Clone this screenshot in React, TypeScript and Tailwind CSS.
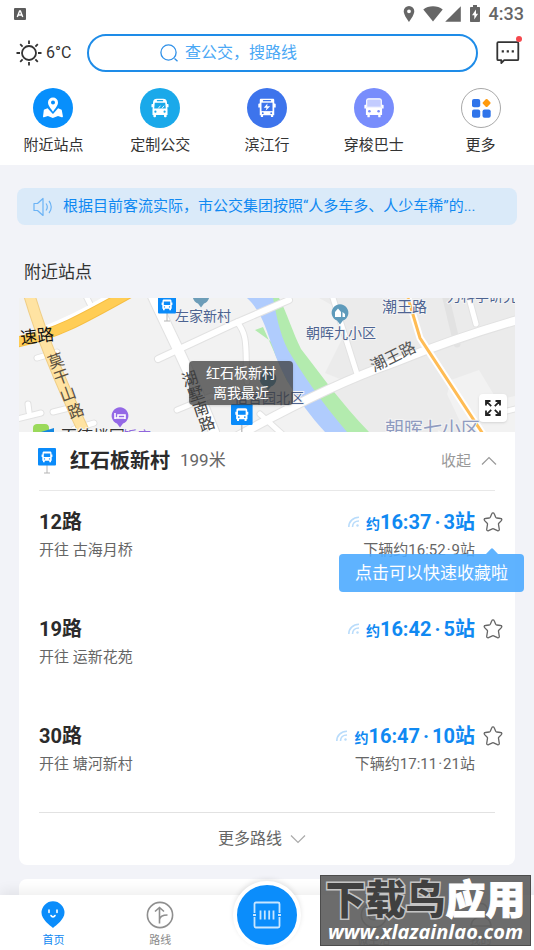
import { useState } from "react";
import type { ReactNode } from "react";

const shortcuts = [
  { label: "附近站点", bg: "bg-[#078ffc]", icon: <NearbyIcon /> },
  { label: "定制公交", bg: "bg-[#1aa9ea]", icon: <CoachIcon /> },
  { label: "滨江行", bg: "bg-[#3d74ec]", icon: <RiverBusIcon /> },
  { label: "穿梭巴士", bg: "bg-[#788dfc]", icon: <ShuttleIcon /> },
  { label: "更多", bg: "border border-[#a8a8a8] bg-white", icon: <MoreIcon /> },
];

const routes = [
  { id: 12, to: "古海月桥", time: "16:37", stops: 3, next: "16:52", nextStops: 9 },
  { id: 19, to: "运新花苑", time: "16:42", stops: 5 },
  { id: 30, to: "塘河新村", time: "16:47", stops: 10, next: "17:11", nextStops: 21 },
];

function NearbyIcon() {
  return (
    <svg viewBox="0 0 24 24" className="size-6" fill="#fff">
      <path d="M6.600 12.200 3.400 13.400c-.4.100-.6.400-.6.800L2 20.400c-.1.700.4 1.100 1 .9l3.900-1.200 4.900 1.800 5.200-1.800 3.700 1.200c.7.200 1.300-.3 1.200-1L20.800 14.200c-.1-.4-.3-.7-.7-.8l-3-1.100-4.600 5.200c-.3.300-.8.300-1.100 0z" />
      <path fillRule="evenodd" d="M12 1.500a5 5 0 0 0-5 5c0 3.400 3.200 6.200 5 9.300 1.800-3.100 5-5.900 5-9.300a5 5 0 0 0-5-5zm0 3.100a2 2 0 1 1 0 4 2 2 0 0 1 0-4z" />
    </svg>
  );
}

function CoachIcon() {
  return (
    <svg viewBox="0 0 24 24" className="size-[22px]">
      <path
        fill="#fff"
        d="M8.500 1.800h7c2.300 0 3.700 1.100 4 3.400l.2 2.300h.8c.5 0 .8.300.8.800v3h-1.400l.3 2.200v6h-1v1.700c0 .5-.4.900-.9.900H17.300c-.5 0-.9-.4-.9-.9v-1.700H7.600v1.700c0 .5-.4.900-.9.900H5.700c-.5 0-.9-.4-.9-.9v-1.700h-1v-6l.3-2.200H2.700v-3c0-.5.300-.8.800-.8h.8l.2-2.300c.3-2.300 1.700-3.400 4-3.400z"
      />
      <rect x="8.500" y="3.300" width="7" height="1.300" rx=".6" fill="#1aa9ea" />
      <path d="M6.300 6.200h11.400l.6 6.300H5.700z" fill="#1aa9ea" />
      <path d="m10 12.500 2.500-3M14 12.500l2.500-3" stroke="#fff" strokeWidth="1" />
      <circle cx="7" cy="16" r="1.200" fill="#1aa9ea" />
      <circle cx="17" cy="16" r="1.200" fill="#1aa9ea" />
    </svg>
  );
}

function RiverBusIcon() {
  return (
    <svg viewBox="0 0 24 24" className="size-[22px]">
      <path
        fill="#fff"
        d="M5.500 2h13c.8 0 1.400.6 1.400 1.400V7h.7c.5 0 .9.400.9.900v3.600h-1.600v8.300h-1.200v1.900h-2.400v-1.900H7.700v1.900H5.300v-1.900H4.100v-8.300H2.500V7.900c0-.5.400-.9.900-.9h.7V3.400C4.100 2.600 4.700 2 5.500 2z"
      />
      <rect x="7.500" y="3.300" width="9" height="1.300" rx=".6" fill="#3d74ec" />
      <path d="M6 6.200h12v9.200H6z" fill="#3d74ec" />
      <path d="m12.500 7-4 4.600h3l-1 3.400 5-5h-3.300z" fill="#fff" />
      <circle cx="7.400" cy="17.600" r="1" fill="#3d74ec" />
      <circle cx="16.600" cy="17.600" r="1" fill="#3d74ec" />
    </svg>
  );
}

function ShuttleIcon() {
  return (
    <svg viewBox="0 0 24 24" className="size-[22px]">
      <path d="M6 2h12c1.100 0 2 .8 2 1.900v7.300H4V3.900C4 2.800 4.900 2 6 2z" fill="#c3ccff" stroke="#fff" strokeWidth="1.200" />
      <path
        fill="#fff"
        d="M2.200 8.500h1.300v3h17v-3h1.300c.4 0 .7.300.7.700v3.300h-1.700v7.200h-1.600v1.800c0 .3-.3.600-.6.600h-1.400c-.3 0-.6-.3-.6-.6v-1.800H7.400v1.800c0 .3-.3.600-.6.600H5.400c-.3 0-.6-.3-.6-.6v-1.800H3.200v-7.200H1.500V9.200c0-.4.300-.7.700-.7z"
      />
      <circle cx="7" cy="15.500" r="1.400" fill="#788dfc" />
      <circle cx="17" cy="15.500" r="1.400" fill="#788dfc" />
    </svg>
  );
}

function MoreIcon() {
  return (
    <svg viewBox="0 0 24 24" className="size-6">
      <rect x="3" y="3" width="8.200" height="8.200" rx="2" fill="#2f74ea" />
      <rect x="3" y="13.500" width="8.200" height="8.200" rx="2" fill="#2f74ea" />
      <rect x="13.500" y="13.500" width="8.200" height="8.200" rx="2" fill="#2f74ea" />
      <rect x="14.400" y="3.800" width="6.400" height="6.400" rx="1.200" fill="#ff9a0c" transform="rotate(45 17.600 7)" />
    </svg>
  );
}

function StatusBar() {
  return (
    <div className="flex h-7 items-center justify-between pr-2.5 pl-3.5">
      <svg viewBox="0 0 12 12" className="size-3">
        <rect width="12" height="12" rx="1" fill="#5c5c5c" />
        <path d="m3.300 9 2.300-6h.8l2.300 6M4.200 7h3.600" stroke="#fff" strokeWidth="1.400" fill="none" />
      </svg>
      <div className="flex items-center text-[#666]">
        <svg viewBox="0 0 12 16" className="h-4 w-3" fill="currentColor">
          <path fillRule="evenodd" d="M6 0a5.300 5.300 0 0 0-5.300 5.300C.7 9.300 6 16 6 16s5.300-6.700 5.300-10.700A5.300 5.300 0 0 0 6 0zm0 3.400a1.900 1.900 0 1 1 0 3.800 1.900 1.900 0 0 1 0-3.800z" />
        </svg>
        <svg viewBox="0 0 20 16" className="ml-2 h-4 w-5" fill="currentColor">
          <path d="M10 15.500.3 3.400C3 1.400 6.300.3 10 .3s7 1.100 9.700 3.100z" />
        </svg>
        <svg viewBox="0 0 16 16" className="ml-0.5 size-4" fill="currentColor">
          <path d="M15.800.2v15.600H.2z" />
        </svg>
        <svg viewBox="0 0 12 18" className="ml-2 h-[18px] w-3" fill="currentColor">
          <path fillRule="evenodd" d="M4 0h4v2h2c.6 0 1 .4 1 1v13c0 .6-.4 1-1 1H2c-.6 0-1-.4-1-1V3c0-.6.4-1 1-1h2zm3 4.500L3 10.300h2.300v4.200l3.800-5.700H7z" />
        </svg>
        <span className="ml-2 text-lg leading-7 font-medium">4:33</span>
      </div>
    </div>
  );
}

function SearchRow() {
  return (
    <div className="flex items-center pt-1.5 pr-3.5 pl-4">
      <div className="flex w-[71px] items-center gap-1">
        <svg viewBox="0 0 26 26" className="size-[26px]" fill="none" stroke="#333" strokeWidth="1.800">
          <circle cx="13" cy="13" r="7" />
          <path d="M13 .5v3.500M13 22v3.500M.5 13H4M22 13h3.500M4.200 4.200l2.400 2.400M19.400 19.400l2.400 2.400M4.200 21.800l2.400-2.400M19.400 6.600l2.400-2.400" />
        </svg>
        <span className="text-base text-[#333]">6°C</span>
      </div>
      <label className="flex h-[38px] flex-1 items-center rounded-full border-2 border-[#1e8ce8] bg-white pl-[70px]">
        <svg viewBox="0 0 20 20" className="size-5" fill="none" stroke="#2f90e8" strokeWidth="1.300">
          <circle cx="9.500" cy="9.500" r="7.600" />
          <path d="m15.500 15.500 3 2.800" />
        </svg>
        <input
          type="search"
          aria-label="搜索"
          placeholder="查公交，搜路线"
          className="ml-1.5 w-40 bg-transparent text-base outline-none placeholder:text-[#4aa8f5]"
        />
      </label>
      <button type="button" aria-label="消息" className="relative ml-4">
        <svg viewBox="0 0 26 26" className="size-[26px]" fill="none" stroke="#333" strokeWidth="1.800" strokeLinejoin="round">
          <path d="M4.300 2.200h19c.6 0 1 .4 1 1v16c0 .6-.4 1-1 1H10.200L7.300 23V20.200h-3c-.6 0-1-.4-1-1v-16c0-.6.400-1 1-1z" />
          <path d="M7.700 11.300h2.200M12.700 11.300h2.200M17.700 11.300h2.200" strokeWidth="2.200" />
        </svg>
        <span className="absolute -top-1 -right-0.5 size-1.5 rounded-full bg-[#f5484d]" />
      </button>
    </div>
  );
}

function BusSign({ className }: { className: string }) {
  return (
    <svg viewBox="0 0 18 26" className={className}>
      <BusSignShape />
    </svg>
  );
}

function BusSignShape() {
  return (
    <>
      <path d="M9 17v8M6 25h6" stroke="#b5b5b5" strokeWidth="1" />
      <rect width="18" height="17.500" rx="1" fill="#0a8bfa" />
      <path
        fill="#fff"
        d="M6 3.500h6c1 0 1.500.6 1.500 1.500v1.500h.9v2.500h-.7v3.700h-.7v1.500h-1.700v-1.500H6.700v1.500H5v-1.500h-.7V9h-.7V6.500h.9V5c0-.9.500-1.500 1.500-1.500z"
      />
      <path d="M5.800 5.500h6.400V9H5.800z" fill="#0a8bfa" />
      <circle cx="6.500" cy="10.900" r=".7" fill="#0a8bfa" />
      <circle cx="11.500" cy="10.900" r=".7" fill="#0a8bfa" />
    </>
  );
}

function Pin({ x, y, color, children }: { x: number; y: number; color: string; children?: ReactNode }) {
  return (
    <g transform={`translate(${x} ${y})`}>
      <path d="M0 11.500-3 7.600a8.400 8.400 0 1 1 6 0z" fill={color} />
      {children}
    </g>
  );
}

function StationMap() {
  const moganshan = [
    { c: "莫", x: 37, y: 63 },
    { c: "干", x: 43, y: 79 },
    { c: "山", x: 49, y: 96 },
    { c: "路", x: 57, y: 113 },
  ];
  const hushu = [
    { c: "湖", x: 171, y: 81 },
    { c: "墅", x: 177, y: 96 },
    { c: "南", x: 182, y: 111 },
    { c: "路", x: 188, y: 126 },
  ];
  return (
    <svg viewBox="0 0 496 134" preserveAspectRatio="xMidYMid slice" className="block h-[134px] w-full" fill="none">
      <rect width="496" height="134" fill="#f2f2f2" />
      <path d="M300 0h196v134H330l-8-25-12-16 16-10-20-8 20-40-8-25z" fill="#ebebeb" />
      <path d="m432 82 28-10 18 30 18-4v36h-50l-18-38z" fill="#f2f2f2" />

      {/* river and its banks */}
      <path d="M236 32l8-3 24 54 40 51h42c-28-29-48-57-68-83-8-16-14-36-22-51h-23l24 50z" fill="#b3ebae" />
      <path d="M228 0h26c3 15 6 34 15 52 14 23 34 53 59 82h-22c-29-32-45-61-52-84-7-18-10-35-26-50z" fill="#b0ccfd" />

      {/* side streets: a soft edge under each white road */}
      <g stroke="#e2e2e2" strokeLinecap="round">
        <path d="M133-4c14 32 36 72 62 138" strokeWidth="12" />
        <path d="M139 61 212 27 270 2" strokeWidth="8" />
        <path d="M218 24c12 14 8 28 10 60M66-4l6 12M-2 121l24-6M10 114l-1-8M18 60l20-6M34 114l20-5M158 112l34-14M55 131l20-6" strokeWidth="7" />
        <path d="M208 144c60-34 112-60 166-79 42-17 82-31 128-44" strokeWidth="10" />
        <path d="M314 0l24 76M450 0l7 26M426-4l12 50M472 117l28-7M241 116l22 20" strokeWidth="7" />
      </g>
      <g stroke="#fff" strokeLinecap="round">
        <path d="M133-4c14 32 36 72 62 138" strokeWidth="10" />
        <path d="M139 61 212 27 270 2" strokeWidth="6" />
        <path d="M218 24c12 14 8 28 10 60M66-4l6 12M-2 121l24-6M10 114l-1-8M18 60l20-6M34 114l20-5M158 112l34-14M55 131l20-6" strokeWidth="5" />
        <path d="M208 144c60-34 112-60 166-79 42-17 82-31 128-44" strokeWidth="8" />
        <path d="M314 0l24 76M450 0l7 26M472 117l28-7M241 116l22 20" strokeWidth="5" />
      </g>

      <path d="M24 36C50 26 70 16 96 0" stroke="#fff" strokeWidth="14" />
      <path d="M-2 44C35 37 62 22 112-6" stroke="#f5bd42" strokeWidth="11" />
      <path d="M-2 44C35 37 62 22 112-6" stroke="#ffcd55" strokeWidth="9" />
      <path d="M10-4C24 44 45 92 67 138" stroke="#efce87" strokeWidth="12" />
      <path d="M10-4C24 44 45 92 67 138" stroke="#ffe3a2" strokeWidth="10" />
      <path d="m389 0 12 40 63 96" stroke="#fff" strokeWidth="7" />
      <path d="m389 0 12 40 63 96" stroke="#ffbc54" strokeWidth="3" />

      <g stroke="#f4f4f4" strokeWidth="2" paintOrder="stroke" fill="#4d6391" fontSize="14">
        <text x="156" y="23">左家新村</text>
        <text x="287" y="40">朝晖九小区</text>
        <text x="363" y="14" fontSize="15">潮王路</text>
        <text x="428" y="3">力科学研究</text>
        <text x="215" y="105">宿舍园北区</text>
        <text x="366" y="138" fontSize="19" fill="#8f9bc0">朝晖七小区</text>
        <text x="42" y="144" fontSize="16" fill="#333">百德楼园</text>
        <text x="104" y="143" fill="#9066dc">饭店</text>
      </g>
      <text x="2" y="46" fontSize="17" fill="#111" transform="rotate(-7 2 46)">速路</text>
      <text x="355" y="74" fontSize="16" fill="#555" transform="rotate(-26 355 74)">潮王路</text>
      <g fontSize="16" fill="#5b5141" textAnchor="middle" dominantBaseline="central">
        {moganshan.map((t) => (
          <text key={t.c} x={t.x} y={t.y} transform={`rotate(-20 ${t.x} ${t.y})`}>
            {t.c}
          </text>
        ))}
      </g>
      <g fontSize="16" fill="#444" textAnchor="middle" dominantBaseline="central">
        {hushu.map((t) => (
          <text key={t.c} x={t.x} y={t.y} transform={`rotate(-18 ${t.x} ${t.y})`}>
            {t.c}
          </text>
        ))}
      </g>

      <Pin x={182} y={-2} color="#6d9db8" />
      <Pin x={321} y={15} color="#5f9bbb">
        <path d="M-5 4v-5l3-3.500L1-1v5M2.500 4V-1L5 1v3z" fill="#fff" />
      </Pin>
      <Pin x={249} y={81} color="#4789a8" />
      <Pin x={101} y={118} color="#9468e6">
        <path d="M-5-3v6M-5 2H5M5 3V-1h-7v3" stroke="#fff" strokeWidth="1.600" />
      </Pin>
      <path d="M14 134v-4c0-3 2-4 4-4h8c3 0 4 2 4 4v4z" fill="#9ad95a" />
      <path d="m22 134 13-4v4z" fill="#1487e0" />
      <g transform="translate(139 -2)">
        <BusSignShape />
      </g>
      <g transform="translate(212 106) scale(1.200)">
        <BusSignShape />
      </g>
    </svg>
  );
}

function MapPanel() {
  return (
    <div className="relative">
      <StationMap />
      <div className="absolute top-[63px] left-[170px] flex h-11 w-[104px] flex-col items-center justify-center rounded-sm bg-[#3c3c3c]/75 text-sm leading-5 text-white shadow">
        <span>红石板新村</span>
        <span>离我最近</span>
      </div>
      <button
        type="button"
        aria-label="全屏地图"
        className="absolute right-2 bottom-2.5 flex size-7 items-center justify-center rounded bg-white shadow"
      >
        <svg viewBox="0 0 16 16" className="size-4" fill="none" stroke="#222" strokeWidth="1.800">
          <path d="M1 5.500V1h4.500M1.200 1.200l5 5M10.500 1H15v4.500M14.800 1.200l-5 5M1 10.500V15h4.500M1.200 14.800l5-5M15 10.500V15h-4.500M14.800 14.800l-5-5" />
        </svg>
      </button>
    </div>
  );
}

function Signal() {
  return (
    <svg viewBox="0 0 12 12" className="size-3" fill="none" stroke="#b9dcfb" strokeWidth="1.600">
      <path d="M.8 11C.8 5.500 5 1.300 11 1.300M4.500 11c0-3.500 2.500-6 6.500-6" />
      <circle cx="9.500" cy="9.500" r="1.200" fill="#b9dcfb" stroke="none" />
    </svg>
  );
}

function RouteRow({ route }: { route: (typeof routes)[number] }) {
  const [saved, setSaved] = useState(false);

  return (
    <li className="flex h-[107px] pt-[17px]">
      <div className="flex-1">
        <h3 className="text-xl leading-7 font-bold text-[#2b2b2b]">{route.id}路</h3>
        <p className="text-[15px] leading-7 text-[#666]">开往 {route.to}</p>
      </div>
      <div className="text-right">
        <div className="flex items-center justify-end text-[#1089f2]">
          <Signal />
          <p className="ml-1.5 text-xl leading-7 font-bold">
            <span className="text-sm">约</span>
            {route.time}
            <span className="mx-[3px]">·</span>
            {route.stops}站
          </p>
        </div>
        {route.next && (
          <p className="text-[15px] leading-7 text-[#666]">
            下辆约{route.next}
            <span className="mx-px">·</span>
            {route.nextStops}站
          </p>
        )}
      </div>
      <button type="button" aria-label="收藏" onClick={() => setSaved(!saved)} className="mt-1 ml-2 size-5">
        <svg viewBox="0 0 20 20" className="size-5" fill={saved ? "#1089f2" : "none"} stroke="#666" strokeWidth="1.300" strokeLinejoin="round">
          <path d="M8.900 1.600c.4-1 1.800-1 2.200 0l1.600 3.700c.2.400.5.700 1 .7l4 .5c1.100.1 1.500 1.400.7 2.100l-2.600 2.700c-.3.300-.4.700-.3 1.100l.8 4.900c.2 1.100-.9 1.900-1.800 1.400l-3.900-1.900a1.400 1.400 0 0 0-1.200 0l-3.900 1.900c-.9.500-2-.3-1.800-1.400l.8-4.900c.1-.4 0-.8-.3-1.100L1.600 8.600C.8 7.900 1.200 6.600 2.300 6.500l4-.5c.5 0 .8-.3 1-.7z" />
        </svg>
      </button>
    </li>
  );
}

function StationCard() {
  const [open, setOpen] = useState(true);

  return (
    <section className="mx-[19px] rounded-lg bg-white">
      <MapPanel />
      <div className="mx-5 flex h-[59px] items-center border-b border-[#e8e8e8]">
        <BusSign className="-ml-px h-[26px] w-[18px]" />
        <h2 className="ml-3.5 text-xl font-bold text-[#2b2b2b]">红石板新村</h2>
        <span className="ml-2.5 text-[17px] text-[#666]">199米</span>
        <button type="button" onClick={() => setOpen(!open)} className="-mr-0.5 ml-auto flex items-center gap-2.5 text-[15px] text-[#999]">
          收起
          <svg viewBox="0 0 16 10" className="h-2.5 w-4" fill="none" stroke="#999" strokeWidth="1.200">
            <path d="m1 8.500 7-7 7 7" />
          </svg>
        </button>
      </div>
      {open && (
        <div className="relative">
          <ul className="mr-3 ml-5">
            {routes.map((route) => (
              <RouteRow key={route.id} route={route} />
            ))}
          </ul>
          <div role="tooltip" className="absolute top-[63px] -right-[9px] rounded bg-[#4eabff]/90 px-4 text-[17px] leading-[38px] text-white">
            <svg viewBox="0 0 12 6" className="absolute -top-1.5 right-[26px] h-1.5 w-3" fill="#4eabff" fillOpacity=".9">
              <path d="M0 6 4.800 1a1.600 1.600 0 0 1 2.400 0L12 6z" />
            </svg>
            点击可以快速收藏啦
          </div>
        </div>
      )}
      <div className="mx-5 border-t border-[#e2e2e2]">
        <button type="button" className="flex h-[52px] w-full items-center justify-center gap-2 pr-2.5 text-base text-[#666]">
          更多路线
          <svg viewBox="0 0 16 10" className="h-2.5 w-4" fill="none" stroke="#aaa" strokeWidth="1.200">
            <path d="m1 1.500 7 7 7-7" />
          </svg>
        </button>
      </div>
    </section>
  );
}

function TabBar() {
  return (
    <nav className="relative grid h-[55px] shrink-0 grid-cols-5 bg-white text-[11px] leading-4 text-[#8a8a8a] shadow-[0_-4px_12px_rgba(0,0,0,0.07)]">
      <a href="#home" className="flex flex-col items-center gap-1 pt-1.5 text-[#1089f2]">
        <svg viewBox="0 0 24 28" className="h-7 w-6">
          <path d="M12 27C9 24.500.5 18.500.5 11.800a11.500 11.500 0 0 1 23 0C23.500 18.500 15 24.500 12 27z" fill="#0b8dfb" />
          <path d="M8 9v2.500M16 9v2.500M10 14.500c1 1.800 3 1.800 4 0" stroke="#fff" strokeWidth="1.600" fill="none" strokeLinecap="round" />
        </svg>
        首页
      </a>
      <a href="#routes" className="flex flex-col items-center gap-1 pt-1.5">
        <svg viewBox="0 0 28 28" className="size-7" fill="none" stroke="#8f8f8f" strokeWidth="1.600">
          <circle cx="14" cy="14" r="12.600" />
          <path d="M13.500 22.500V7M9 10.500l4.500-4 4.500 4M13.500 18.500c.5-3 3-4.500 8-4.500" />
        </svg>
        路线
      </a>
      <div className="flex justify-center">
        <button
          type="button"
          aria-label="乘车码"
          className="-mt-[14px] flex size-[68px] items-center justify-center rounded-full border-4 border-white bg-[#0b8dfb] shadow-[0_-2px_5px_rgba(0,0,0,0.1)]"
        >
          <svg viewBox="0 0 28 28" className="size-7" fill="none" stroke="#c8e6ff" strokeWidth="1.800">
            <path d="M1.500 12V3c0-1 .5-1.500 1.500-1.500h22c1 0 1.500.5 1.500 1.500v9M1.500 16v9c0 1 .5 1.500 1.500 1.500h22c1 0 1.500-.5 1.500-1.500v-9M0 14h3M25 14h3" />
            <path d="M7.500 9.500v9M11.800 9.500v9M16.200 9.500v9M20.500 9.500v9" />
          </svg>
        </button>
      </div>
      <a href="#life" className="flex flex-col items-center gap-1 pt-1.5">
        <svg viewBox="0 0 28 28" className="size-7" fill="none" stroke="#8f8f8f" strokeWidth="1.600">
          <circle cx="14" cy="14" r="12.600" />
          <path d="M8 15c2 5 10 5 12 0" />
        </svg>
        微生活
      </a>
      <a href="#me" className="flex flex-col items-center gap-1 pt-1.5">
        <svg viewBox="0 0 28 28" className="size-7" fill="none" stroke="#8f8f8f" strokeWidth="1.600">
          <circle cx="14" cy="9" r="6.500" />
          <path d="M4 25c0-12 20-12 20 0z" />
        </svg>
        我的
      </a>
    </nav>
  );
}

function SiteBadge() {
  return (
    <div className="absolute right-[3px] bottom-1 flex h-[71px] w-[211px] flex-col items-center justify-center overflow-hidden border border-[#4c4c4c] bg-[#5c5c5c]/90 whitespace-nowrap">
      <p className="text-[40px] leading-[42px] font-black text-white">
        <span className="text-[#404040] [-webkit-text-stroke:3px_#c4c4c4] [paint-order:stroke_fill]">下载鸟</span>
        <span className="[-webkit-text-stroke:1px_#fff]">应用</span>
      </p>
      <p className="font-['Open_Sans'] text-xl leading-5 font-bold text-white italic">www.xlazainlao.com</p>
    </div>
  );
}

export default function App() {
  return (
    <div className="relative flex h-screen flex-col overflow-hidden bg-[#f2f3f8] font-[Roboto,'Noto_Sans_CJK_SC',sans-serif]">
      <header className="shrink-0 bg-white pb-2">
        <StatusBar />
        <SearchRow />
        <div className="mt-4 grid grid-cols-5">
          {shortcuts.map((item) => (
            <button key={item.label} type="button" className="flex flex-col items-center gap-[5px]">
              <span className={`flex size-10 items-center justify-center rounded-full ${item.bg}`}>{item.icon}</span>
              <span className="text-[15px] leading-6 text-[#333]">{item.label}</span>
            </button>
          ))}
        </div>
      </header>

      <main className="min-h-0 flex-1 overflow-hidden">
        <a href="#notice" className="mx-[17px] mt-[23px] flex h-[37px] items-center rounded-lg bg-[#daeaf9] pr-7 pl-4 text-[15px] text-[#1089f2]">
          <svg viewBox="0 0 20 20" className="size-5 shrink-0" fill="none" stroke="#6bb3f5" strokeWidth="1.200" strokeLinejoin="round">
            <path d="M1 6.500h3.500L10 1.500v17l-5.500-5H1zM13 6.500c1.500 2 1.500 5 0 7M16 4c3 3.500 3 8.500 0 12" />
          </svg>
          <span className="ml-2.5 truncate">根据目前客流实际，市公交集团按照“人多车多、人少车稀”的...</span>
        </a>
        <h2 className="mt-8 mb-[11px] ml-6 text-[17px] leading-[30px] text-[#333]">附近站点</h2>
        <StationCard />
        <div className="mx-[19px] mt-3.5 h-20 rounded-lg bg-white" />
      </main>

      <TabBar />
      <SiteBadge />
    </div>
  );
}
